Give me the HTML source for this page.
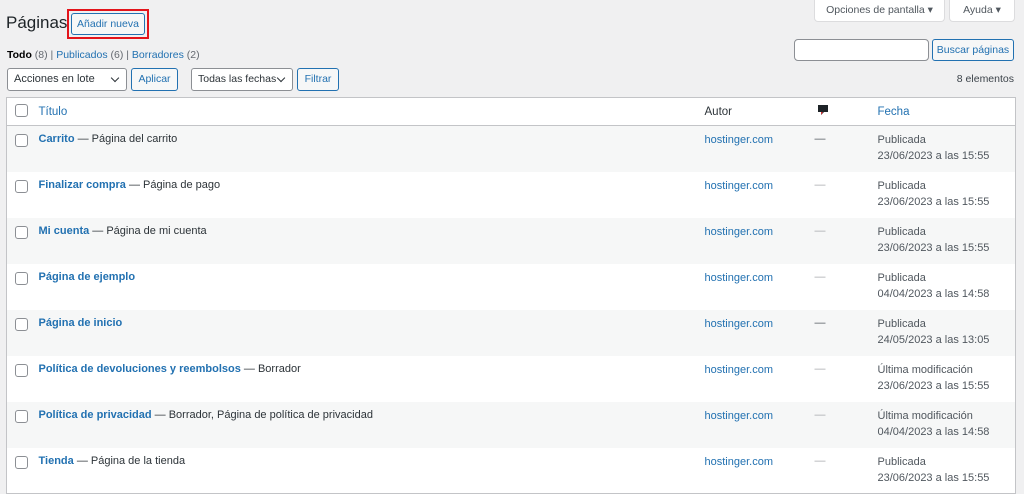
<!DOCTYPE html>
<html><head><meta charset="utf-8"><style>
*{box-sizing:border-box}
body{margin:0;width:1024px;height:491px;overflow:hidden;background:#f0f0f1;font-family:"Liberation Sans",sans-serif;font-size:11px;color:#3c434a;position:relative}
a{color:#2271b1;text-decoration:none}
.abs{position:absolute}
h1{position:absolute;left:6px;top:13px;margin:0;font-size:17px;font-weight:400;color:#1d2327}
.btn{position:absolute;border:1px solid #2271b1;border-radius:3px;color:#2271b1;background:#f6f7f7;font-size:10.5px;text-align:center}
.sel{position:absolute;border:1px solid #8c8f94;border-radius:3px;background:#fff;font-size:11px;color:#2c3338;padding-left:6px}
.sel:after{content:"";position:absolute;right:8px;top:6px;width:5px;height:5px;border-right:1.5px solid #2c3338;border-bottom:1.5px solid #2c3338;transform:rotate(45deg)}
.tab{position:absolute;background:#fff;border:1px solid #dcdcde;border-top:none;border-radius:0 0 4px 4px;font-size:10.5px;color:#50575e;text-align:center}
table{position:absolute;left:6px;top:97px;width:1010px;border-collapse:collapse;background:#fff;border:1px solid #c3c4c7}
td{vertical-align:top;padding:0}
tr.h td{height:28px;border-bottom:1px solid #c3c4c7;vertical-align:middle;font-size:11.5px}
tr.r td{height:46px;font-size:11px}
tr.r:nth-child(even) td{background:#f6f7f7}
.cb{width:13px;height:13px;border:1px solid #8c8f94;border-radius:3px;background:#fff;display:inline-block}
.t{font-size:11.5px;padding-top:7px;color:#2c3338}
.t a{font-weight:600;color:#2271b1}
.au{padding-top:8px}
.d{padding-top:6px;line-height:16px;color:#50575e}
.dash{padding-top:7px;color:#a7aaad}
</style></head><body>
<h1>Páginas</h1>
<div class="abs" style="left:67px;top:9px;width:82px;height:30px;border:2px solid #e3141b"></div>
<div class="btn" style="left:71px;top:13px;width:74px;height:22px;line-height:20px">Añadir nueva</div>
<div class="tab" style="left:814px;top:0;width:131px;height:22px;line-height:20px">Opciones de pantalla ▾</div>
<div class="tab" style="left:949px;top:0;width:66px;height:22px;line-height:20px">Ayuda ▾</div>
<div class="abs" style="left:7px;top:49px;font-size:10.5px;color:#646970"><b style="color:#000">Todo</b> (8) | <a>Publicados</a> (6) | <a>Borradores</a> (2)</div>
<div class="abs" style="left:794px;top:39px;width:135px;height:22px;border:1px solid #8c8f94;border-radius:4px;background:#fff"></div>
<div class="btn" style="left:932px;top:39px;width:82px;height:22px;line-height:20px">Buscar páginas</div>
<div class="sel" style="left:7px;top:68px;width:120px;height:23px;line-height:21px">Acciones en lote</div>
<div class="btn" style="left:131px;top:68px;width:47px;height:23px;line-height:21px">Aplicar</div>
<div class="sel" style="left:191px;top:68px;width:102px;height:23px;line-height:21px;font-size:10.5px">Todas las fechas</div>
<div class="btn" style="left:297px;top:68px;width:42px;height:23px;line-height:21px">Filtrar</div>
<div class="abs" style="right:10px;top:73px;font-size:10.5px;color:#3c434a">8 elementos</div>
<table>
<tr class="h"><td style="width:32px;padding-left:8px"><span class="cb"></span></td><td style="width:666px"><a>Título</a></td><td style="width:110px;color:#2c3338">Autor</td><td style="width:63px"><svg width="12" height="13" viewBox="0 0 12 13" style="margin-left:2px"><path d="M1 1h10v7H7l-3 3V8H1z" fill="#1d2327"/><path d="M4 8v3l2-3" fill="#d63638"/></svg></td><td><a>Fecha</a></td></tr>
<tr class="r"><td style="padding:8px 0 0 8px"><span class="cb"></span></td><td class="t"><a>Carrito</a> — Página del carrito</td><td class="au"><a>hostinger.com</a></td><td class="dash" style="color:#50575e">—</td><td class="d">Publicada<br>23/06/2023 a las 15:55</td></tr>
<tr class="r"><td style="padding:8px 0 0 8px"><span class="cb"></span></td><td class="t"><a>Finalizar compra</a> — Página de pago</td><td class="au"><a>hostinger.com</a></td><td class="dash">—</td><td class="d">Publicada<br>23/06/2023 a las 15:55</td></tr>
<tr class="r"><td style="padding:8px 0 0 8px"><span class="cb"></span></td><td class="t"><a>Mi cuenta</a> — Página de mi cuenta</td><td class="au"><a>hostinger.com</a></td><td class="dash">—</td><td class="d">Publicada<br>23/06/2023 a las 15:55</td></tr>
<tr class="r"><td style="padding:8px 0 0 8px"><span class="cb"></span></td><td class="t"><a>Página de ejemplo</a></td><td class="au"><a>hostinger.com</a></td><td class="dash">—</td><td class="d">Publicada<br>04/04/2023 a las 14:58</td></tr>
<tr class="r"><td style="padding:8px 0 0 8px"><span class="cb"></span></td><td class="t"><a>Página de inicio</a></td><td class="au"><a>hostinger.com</a></td><td class="dash" style="color:#50575e">—</td><td class="d">Publicada<br>24/05/2023 a las 13:05</td></tr>
<tr class="r"><td style="padding:8px 0 0 8px"><span class="cb"></span></td><td class="t"><a>Política de devoluciones y reembolsos</a> — Borrador</td><td class="au"><a>hostinger.com</a></td><td class="dash">—</td><td class="d">Última modificación<br>23/06/2023 a las 15:55</td></tr>
<tr class="r"><td style="padding:8px 0 0 8px"><span class="cb"></span></td><td class="t"><a>Política de privacidad</a> — Borrador, Página de política de privacidad</td><td class="au"><a>hostinger.com</a></td><td class="dash">—</td><td class="d">Última modificación<br>04/04/2023 a las 14:58</td></tr>
<tr class="r"><td style="padding:8px 0 0 8px"><span class="cb"></span></td><td class="t"><a>Tienda</a> — Página de la tienda</td><td class="au"><a>hostinger.com</a></td><td class="dash">—</td><td class="d">Publicada<br>23/06/2023 a las 15:55</td></tr>
</table>
</body></html>
